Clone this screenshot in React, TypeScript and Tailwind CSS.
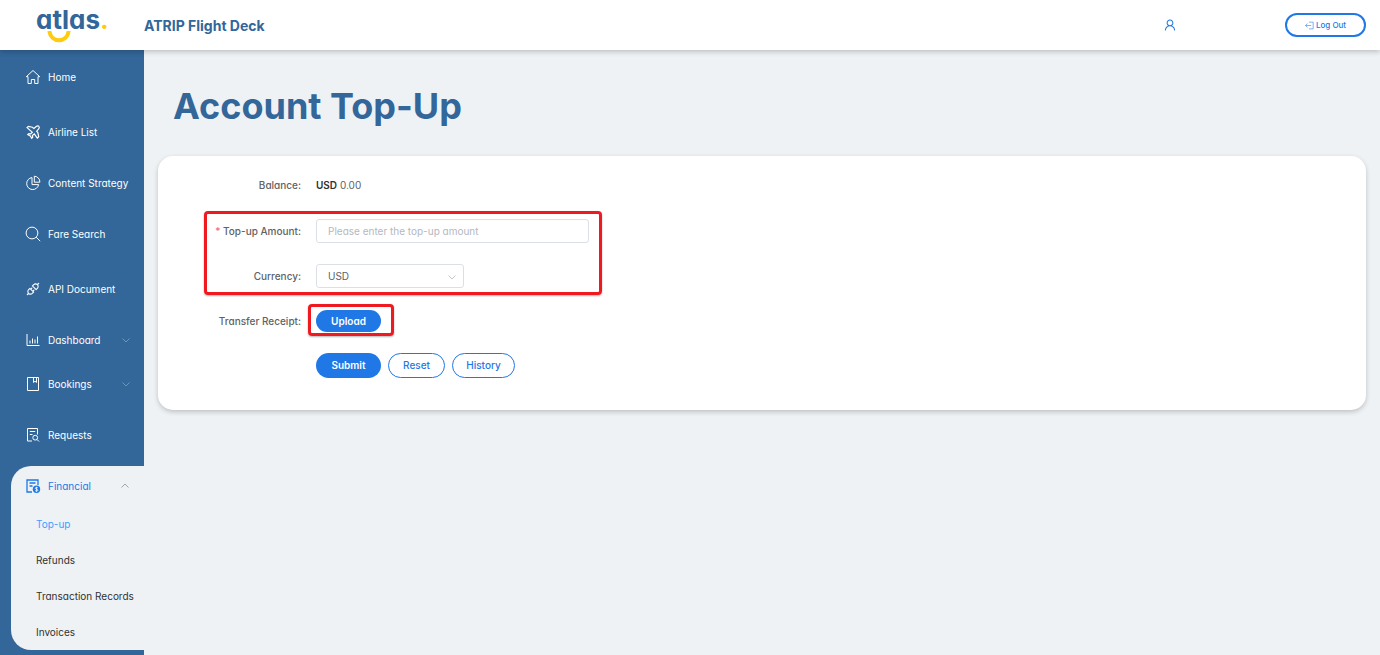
import { ReactNode, useState } from 'react';
import { AiOutlineApi, AiOutlineUser } from 'react-icons/ai';

interface IconProps {
  className?: string;
  children: ReactNode;
}

interface NavItemProps {
  label: string;
  icon: ReactNode;
  className: string;
  expandable?: boolean;
}

function Icon({ className = 'size-4', children }: IconProps) {
  return (
    <svg
      viewBox="0 0 16 16"
      className={`shrink-0 ${className}`}
      fill="none"
      stroke="currentColor"
      strokeWidth="1"
      aria-hidden="true"
    >
      {children}
    </svg>
  );
}

function Chevron({ className }: { className: string }) {
  return (
    <svg viewBox="0 0 8 8" className={className} fill="none" stroke="currentColor" strokeWidth="0.8" aria-hidden="true">
      <path d="M0.5 2.5 4 6l3.5-3.5" />
    </svg>
  );
}

const navItems: NavItemProps[] = [
  {
    label: 'Home',
    className: 'mt-[7px]',
    icon: (
      <Icon>
        <path d="M3 14.5V7.700H1.300L8 1.500l6.700 6.200H13v6.800H9.700v-4H6.300v4H3Z" />
      </Icon>
    ),
  },
  {
    label: 'Airline List',
    className: 'mt-[15px]',
    icon: (
      <Icon>
        <path
          strokeWidth="1.200"
          d="M2 3.600 3.400 2.300l4 .9 1.500 1.200 2-1.700c1-.7 2.600-.8 3-.4s.3 2-.4 2.900l-1.800 2 1.200 1.600.8 3.900-1.400 1.300-3-4.200-1.900 1.700.3 1.900-1 1-1.400-2.400-2.500-1.300 1-1 1.900.2L7.300 8.200 2 3.600Z"
        />
      </Icon>
    ),
  },
  {
    label: 'Content Strategy',
    className: 'mt-[11px]',
    icon: (
      <Icon>
        <path d="M7 2.600a6 6 0 1 0 6.600 7H7v-7Z" />
        <path d="M9.300 1.200v6h5.600a5.800 5.800 0 0 0-5.600-6Z" />
      </Icon>
    ),
  },
  {
    label: 'Fare Search',
    className: 'mt-[11px]',
    icon: (
      <Icon>
        <circle cx="7" cy="7" r="5.900" />
        <path d="m11.200 11.200 4 4" />
      </Icon>
    ),
  },
  { label: 'API Document', className: 'mt-[15px]', icon: <AiOutlineApi className="size-4 shrink-0" aria-hidden="true" /> },
  {
    label: 'Dashboard',
    className: 'mt-[11px]',
    expandable: true,
    icon: (
      <Icon>
        <path d="M2 2v11.500h12.500M5 11.500V8.500M7.500 11.500V6.500M10 11.500V7.500M12.500 11.500V4.500" />
      </Icon>
    ),
  },
  {
    label: 'Bookings',
    className: 'mt-1',
    expandable: true,
    icon: (
      <Icon>
        <path d="M2.500 1.500h11v13h-11zM8.500 1.500v5l1.500-1.300 1.500 1.300v-5" />
      </Icon>
    ),
  },
  {
    label: 'Requests',
    className: 'mt-[11px]',
    icon: (
      <Icon>
        <path d="M7 14H2.500V1.500h10v6M4.800 4.500h5.400M4.800 7.500h2.700" />
        <circle cx="10.200" cy="10.700" r="2.400" />
        <path d="m12 12.500 2 2" />
      </Icon>
    ),
  },
];

const financialLinks = ['Top-up', 'Refunds', 'Transaction Records', 'Invoices'];

function NavItem({ label, icon, className, expandable }: NavItemProps) {
  return (
    <li className={className}>
      <a href="#" className="flex h-10 items-center gap-[7px] pr-[14px] pl-[25px] text-[10px] text-white">
        {icon}
        <span className="grow whitespace-nowrap">{label}</span>
        {expandable && <Chevron className="size-2 text-[#7e9fc0]" />}
      </a>
    </li>
  );
}

function Header() {
  return (
    <header className="relative z-10 flex h-[50px] items-center bg-white pr-[14px] shadow-[0_2px_5px_rgba(0,0,0,0.2)]">
      <a href="#" aria-label="atlas." className="flex h-full w-36 shrink-0 flex-col pl-9 text-[#336699]">
        <span className="mt-[7px] text-[26px] leading-[26px] font-bold">
          atlas<span className="text-[#ffcc0d]">.</span>
        </span>
        <svg viewBox="0 0 24 12" className="-mt-[2px] ml-[11px] h-3 w-6" fill="none" stroke="#ffcc0d" strokeWidth="4" aria-hidden="true">
          <path d="M2.300 0c.8 5.800 4.800 9.300 9.700 9.300S20.900 5.800 21.700 0" />
        </svg>
      </a>
      <p className="grow text-[14px] font-bold text-[#336699]">ATRIP Flight Deck</p>
      <button type="button" aria-label="Profile" className="mr-[108px] text-[#1f78e5]">
        <AiOutlineUser className="size-[14px]" />
      </button>
      <button
        type="button"
        className="flex h-6 w-[81px] items-center justify-center gap-[2px] rounded-full border-2 border-[#1f78e5] text-[8px] font-medium text-[#1f78e5]"
      >
        <Icon className="size-[9px]">
          <path d="M7 2h7.500v12H7M11 8H1M4.500 4.500 1 8l3.500 3.500" />
        </Icon>
        Log Out
      </button>
    </header>
  );
}

function Sidebar() {
  const [open, setOpen] = useState(true);

  return (
    <nav className="w-36 shrink-0 bg-[#336699] pb-[5px]">
      <ul>
        {navItems.map((item) => (
          <NavItem key={item.label} {...item} />
        ))}
        <li className="mt-[11px] ml-[11px] rounded-l-[20px] bg-[#eef2f5]">
          <button
            type="button"
            aria-expanded={open}
            onClick={() => setOpen(!open)}
            className="flex h-10 w-full items-center gap-[7px] pr-[15px] pl-[14px] text-left text-[10px] text-[#1f78e5]"
          >
            <Icon>
              <path strokeWidth="1.300" d="M7 14H2V2h11v5M4.500 5h6M4.500 8h3" />
              <circle cx="11.500" cy="11.300" r="3.700" fill="currentColor" stroke="none" />
              <path stroke="#eef2f5" strokeWidth="0.900" d="M12.800 9.900c-.8-.8-2.500-.5-2.500.4 0 1.200 2.600.7 2.600 1.900 0 1-1.900 1.200-2.700.4M11.500 8.800v5" />
            </Icon>
            <span className="grow">Financial</span>
            <Chevron className="size-2 rotate-180 text-[#8c9196]" />
          </button>
          {open && (
            <ul>
              {financialLinks.map((label, i) => (
                <li key={label}>
                  <a
                    href="#"
                    className={`flex h-9 items-center pl-[25px] text-[10px] whitespace-nowrap ${i === 0 ? 'text-[#409eff]' : 'text-[#303133]'}`}
                  >
                    {label}
                  </a>
                </li>
              ))}
            </ul>
          )}
        </li>
      </ul>
    </nav>
  );
}

function Highlight({ className }: { className: string }) {
  return (
    <div
      className={`pointer-events-none absolute rounded-[4px] border-3 border-[#ee1a1f] shadow-[0_1px_2px_rgba(0,0,0,0.3)] ${className}`}
    />
  );
}

function TopUpForm() {
  return (
    <form
      onSubmit={(e) => e.preventDefault()}
      className="rounded-[15px] bg-white pt-[17px] pb-8 pl-[46px] text-[10px] text-[#606266] shadow-[0_2px_5px_rgba(0,0,0,0.2)]"
    >
      <div className="flex h-6 items-center gap-[15px]">
        <span className="w-[97px] text-right font-medium">Balance:</span>
        <span>
          <b className="font-semibold text-[#303133]">USD</b> 0.00
        </span>
      </div>

      <div className="relative mt-[22px] flex w-[385px] flex-col gap-[21px]">
        <div className="flex h-6 items-center gap-[15px]">
          <label htmlFor="amount" className="w-[97px] text-right font-medium whitespace-nowrap">
            <span className="text-[#f56c6c]">* </span>Top-up Amount:
          </label>
          <input
            id="amount"
            type="text"
            placeholder="Please enter the top-up amount"
            className="h-6 w-[273px] rounded-[3px] border border-[#dcdfe6] px-[11px] text-[10px] outline-none placeholder:text-[#b4b8bf]"
          />
        </div>
        <div className="flex h-6 items-center gap-[15px]">
          <label htmlFor="currency" className="w-[97px] text-right font-medium">
            Currency:
          </label>
          <div className="relative w-[148px]">
            <select
              id="currency"
              className="block h-6 w-full appearance-none rounded-[3px] border border-[#dcdfe6] bg-white px-[11px] text-[10px] outline-none"
            >
              <option>USD</option>
            </select>
            <Chevron className="pointer-events-none absolute top-[9px] right-2 size-2 text-[#b4b8bf]" />
          </div>
        </div>
        <Highlight className="-top-2 -right-[13px] -bottom-[7px] left-0" />
      </div>

      <div className="mt-[21px] flex h-6 items-center gap-[15px]">
        <span className="w-[97px] text-right font-medium whitespace-nowrap">Transfer Receipt:</span>
        <div className="relative">
          <button type="button" className="block h-[22px] w-[65px] rounded-full bg-[#1f78e5] font-semibold text-white">
            Upload
          </button>
          <Highlight className="-top-[6px] -right-[13px] -bottom-1 -left-2" />
        </div>
      </div>

      <div className="mt-5 ml-28 flex gap-[7px] font-medium text-[#1f78e5]">
        <button type="submit" className="h-[25px] w-[65px] rounded-full bg-[#1f78e5] font-semibold text-white">
          Submit
        </button>
        <button type="reset" className="h-[25px] w-[57px] rounded-full border border-[#1f78e5]">
          Reset
        </button>
        <button type="button" className="h-[25px] w-[63px] rounded-full border border-[#1f78e5]">
          History
        </button>
      </div>
    </form>
  );
}

export default function App() {
  return (
    <div className="flex min-h-screen flex-col bg-[#eef2f5] font-['Inter',sans-serif] [font-feature-settings:'cv11']">
      <Header />
      <div className="flex grow">
        <Sidebar />
        <main className="grow px-[14px] pt-8">
          <h1 className="mb-[26px] pl-[15px] text-[36px] leading-[48px] font-bold text-[#336699]">Account Top-Up</h1>
          <TopUpForm />
        </main>
      </div>
    </div>
  );
}
